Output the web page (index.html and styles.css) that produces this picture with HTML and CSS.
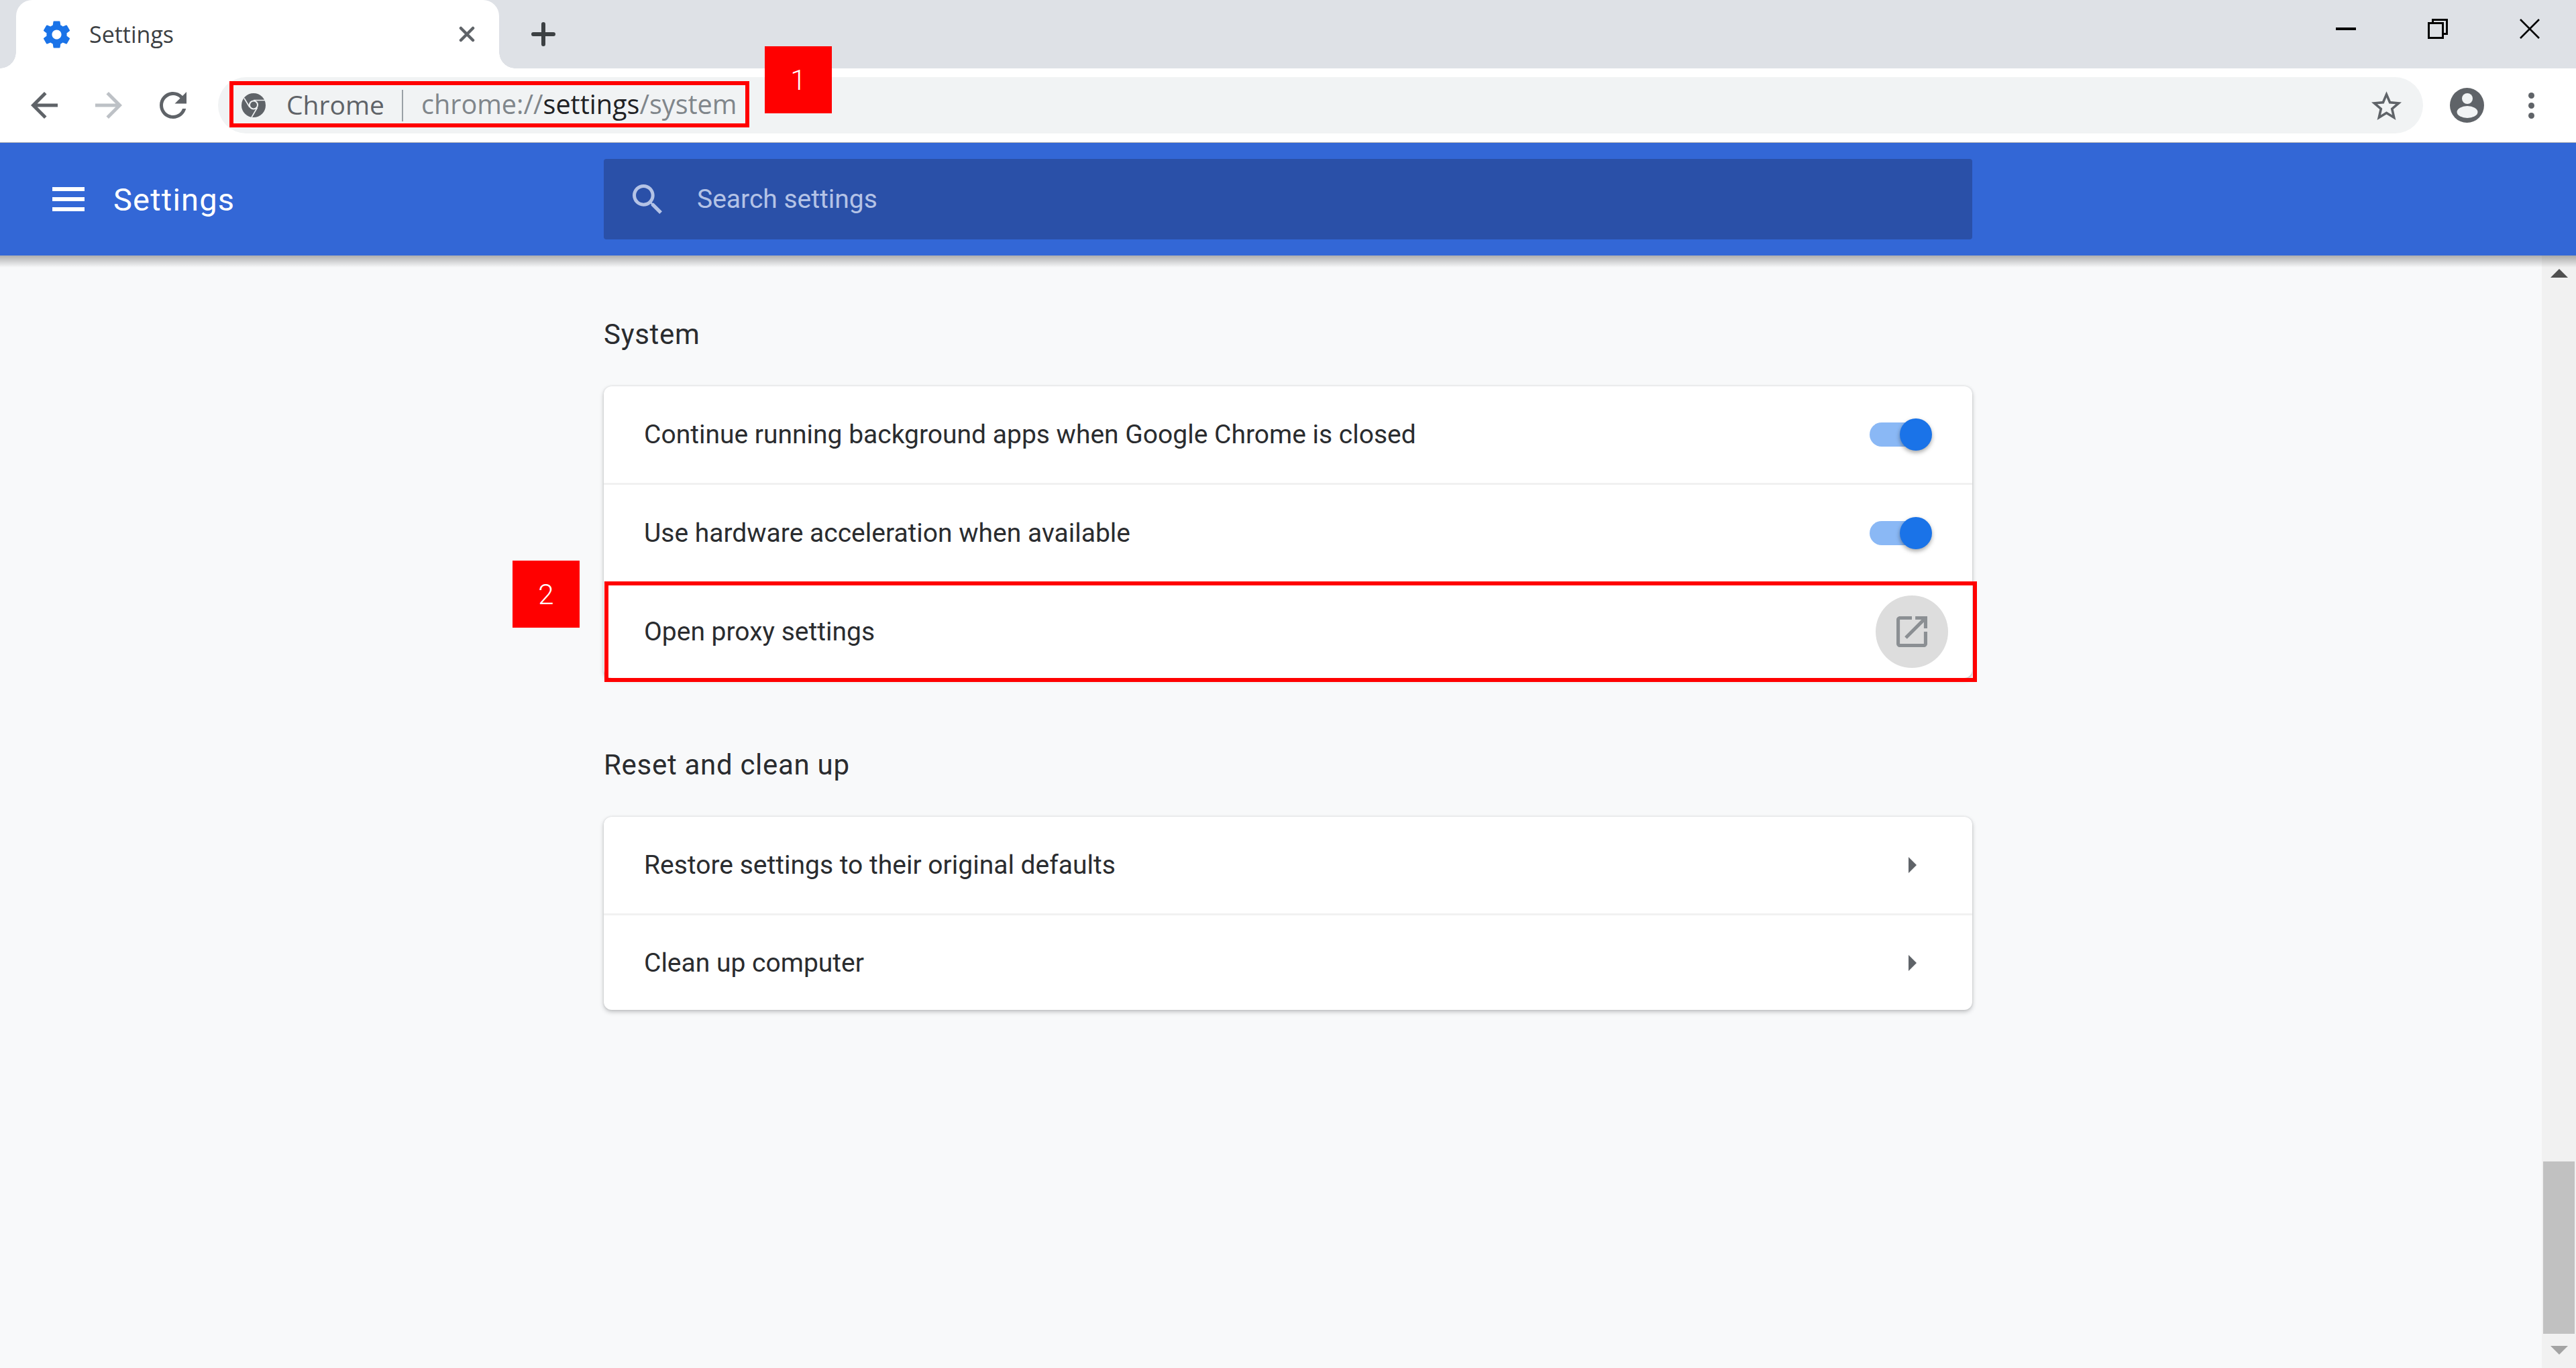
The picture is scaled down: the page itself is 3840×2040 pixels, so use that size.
FILE: index.html
```html
<!DOCTYPE html>
<html lang="en">
<head>
<meta charset="UTF-8">
<title>Settings</title>
<link rel="stylesheet" href="styles.css">
</head>
<body>
<div class="titlebar">
    <div class="tab">
        <svg class="tab-gear" viewBox="2.3 2 19.4 20"><path d="M19.43 12.98c.04-.32.07-.64.07-.98s-.03-.66-.07-.98l2.11-1.65c.19-.15.24-.42.12-.64l-2-3.46c-.12-.22-.39-.3-.61-.22l-2.49 1c-.52-.4-1.08-.73-1.69-.98l-.38-2.65C14.46 2.18 14.25 2 14 2h-4c-.25 0-.46.18-.49.42l-.38 2.65c-.61.25-1.17.59-1.69.98l-2.49-1c-.23-.09-.49 0-.61.22l-2 3.46c-.13.22-.07.49.12.64l2.11 1.65c-.04.32-.07.65-.07.98s.03.66.07.98l-2.11 1.65c-.19.15-.24.42-.12.64l2 3.46c.12.22.39.3.61.22l2.49-1c.52.4 1.08.73 1.69.98l.38 2.65c.03.24.24.42.49.42h4c.25 0 .46-.18.49-.42l.38-2.65c.61-.25 1.17-.59 1.69-.98l2.49 1c.23.09.49 0 .61-.22l2-3.46c.12-.22.07-.49-.12-.64l-2.11-1.65zM12 15.5c-1.93 0-3.5-1.57-3.5-3.5s1.57-3.5 3.5-3.5 3.5 1.57 3.5 3.5-1.57 3.5-3.5 3.5z"/></svg>
        <span class="tab-title">Settings</span>
        <svg class="tab-close" viewBox="0 0 24 24"><path d="M3 3 21 21M21 3 3 21"/></svg>
    </div>
    <svg class="new-tab" viewBox="0 0 36 36"><path d="M18 3V33M3 18H33"/></svg>
    <div class="window-controls">
        <svg class="win-icon" viewBox="0 0 30 30"><rect y="13" width="30" height="4"/></svg>
        <svg class="win-icon" viewBox="0 0 30 30">
            <path class="win-line" d="M1.5 6.5H22.5V28.5H1.5Z"/>
            <path class="win-line" d="M7.5 5.5V1.5H28.5V22.5H23"/>
        </svg>
        <svg class="win-icon" viewBox="0 0 30 30"><path class="win-line thin" d="M1 1 29 29M29 1 1 29"/></svg>
    </div>
</div>

<div class="toolbar">
    <svg class="nav-icon" viewBox="4 4 16 16"><path d="M20 11H7.83l5.59-5.59L12 4l-8 8 8 8 1.41-1.41L7.83 13H20v-2z"/></svg>
    <svg class="nav-icon disabled" viewBox="4 4 16 16"><path d="M4 11h12.17l-5.59-5.59L12 4l8 8-8 8-1.41-1.41L16.17 13H4v-2z"/></svg>
    <svg class="nav-icon" viewBox="4 4 16 16"><path d="M17.65 6.35C16.2 4.9 14.21 4 12 4c-4.42 0-7.99 3.58-7.99 8s3.57 8 7.99 8c3.73 0 6.84-2.55 7.73-6h-2.08c-.82 2.33-3.04 4-5.65 4-3.31 0-6-2.69-6-6s2.69-6 6-6c1.66 0 3.14.69 4.22 1.78L13 11h7V4l-2.35 2.35z"/></svg>
    <div class="omnibox">
        <svg class="site-icon" viewBox="0 0 36 36">
            <circle cx="18" cy="18" r="18" fill="#5f6368"/>
            <circle cx="18" cy="17.5" r="7" fill="#f1f3f4"/>
            <circle cx="18" cy="17.5" r="5" fill="#5f6368"/>
            <path d="M18 10.5H35M12.2 21 4 7.5M23.5 21.5 15 36" stroke="#f1f3f4" stroke-width="1.6" fill="none"/>
        </svg>
        <span class="site-name">Chrome</span>
        <span class="site-sep"></span>
        <span class="url">chrome://<b>settings</b>/system</span>
        <svg class="star" viewBox="2 2 20 19"><path d="M22 9.24l-7.19-.62L12 2 9.19 8.63 2 9.24l5.46 4.73L5.82 21 12 17.27 18.18 21l-1.63-7.03L22 9.24zM12 15.4l-3.76 2.27 1-4.28-3.32-2.88 4.38-.38L12 6.1l1.71 4.04 4.38.38-3.32 2.88 1 4.28L12 15.4z"/></svg>
    </div>
    <svg class="avatar" viewBox="0 0 51 52">
        <ellipse cx="25.5" cy="26" rx="25.5" ry="26" fill="#5f6368"/>
        <circle cx="26" cy="16" r="8" fill="#f1f3f4"/>
        <ellipse cx="26" cy="36" rx="15.5" ry="9" fill="#f1f3f4"/>
    </svg>
    <div class="dots"><span></span><span></span><span></span></div>
</div>

<header class="app-header">
    <div class="hamburger"><span></span><span></span><span></span></div>
    <div class="app-title">Settings</div>
    <div class="search">
        <svg class="search-icon" viewBox="3 3 17.5 17.5"><path d="M15.5 14h-.79l-.28-.27C15.41 12.59 16 11.11 16 9.5 16 5.91 13.09 3 9.5 3S3 5.91 3 9.5 5.91 16 9.5 16c1.61 0 3.09-.59 4.23-1.57l.27.28v.79l5 4.99L20.49 19l-4.99-5zm-6 0C7.01 14 5 11.99 5 9.5S7.01 5 9.5 5 14 7.01 14 9.5 11.99 14 9.5 14z"/></svg>
        <span class="search-text">Search settings</span>
    </div>
</header>

<div class="page">
    <main class="main">
        <h2 class="section-title">System</h2>
        <section class="card">
            <div class="row">
                <span>Continue running background apps when Google Chrome is closed</span>
                <div class="toggle"><span class="knob"></span></div>
            </div>
            <div class="row">
                <span>Use hardware acceleration when available</span>
                <div class="toggle"><span class="knob"></span></div>
            </div>
            <div class="row row-proxy">
                <span>Open proxy settings</span>
                <div class="icon-circle">
                    <svg class="open-icon" viewBox="3 3 18 18"><path d="M19 19H5V5h7V3H5c-1.11 0-2 .9-2 2v14c0 1.1.89 2 2 2h14c1.1 0 2-.9 2-2v-7h-2v7zM14 3v2h3.59l-9.83 9.83 1.41 1.41L19 6.41V10h2V3h-7z"/></svg>
                </div>
            </div>
        </section>

        <h2 class="section-title next">Reset and clean up</h2>
        <section class="card">
            <div class="row">
                <span>Restore settings to their original defaults</span>
                <span class="arrow"></span>
            </div>
            <div class="row">
                <span>Clean up computer</span>
                <span class="arrow"></span>
            </div>
        </section>
    </main>
    <div class="scrollbar">
        <span class="scroll-up"></span>
        <span class="scroll-thumb"></span>
        <span class="scroll-down"></span>
    </div>
</div>

<!-- red annotations on top of the screenshot -->
<div class="mark mark-url"></div>
<div class="badge badge-1">1</div>
<div class="mark mark-proxy"></div>
<div class="badge badge-2">2</div>
</body>
</html>
```

FILE: styles.css
```css
* {
    box-sizing: border-box;
}

html, body {
    margin: 0;
    height: 100%;
    overflow: hidden;
}

body {
    position: relative;
    display: flex;
    flex-direction: column;
    font-family: Roboto, "Liberation Sans", sans-serif;
    background-color: #f8f9fa;
    color: #2a2c2f;
}

/* tab strip */
.titlebar {
    display: flex;
    align-items: center;
    height: 102px;
    padding-left: 24px;
    background-color: #dee1e6;
}

.tab {
    position: relative;
    display: flex;
    align-items: center;
    width: 720px;
    height: 102px;
    padding-left: 41px;
    padding-right: 36px;
    background-color: #fff;
    border-radius: 24px 24px 0 0;
}

.tab::before,
.tab::after {
    content: "";
    position: absolute;
    bottom: 0;
    width: 24px;
    height: 24px;
}

.tab::before {
    left: -24px;
    background: radial-gradient(circle at 0 0, #dee1e6 23.5px, #fff 24px);
}

.tab::after {
    right: -24px;
    background: radial-gradient(circle at 100% 0, #dee1e6 23.5px, #fff 24px);
}

.tab-gear {
    width: 39px;
    height: 41px;
    fill: #1a73e8;
}

.tab-title {
    margin-left: 29px;
    font-family: "Open Sans", sans-serif;
    font-size: 34px;
    color: #3c4043;
}

.tab-close {
    width: 24px;
    height: 24px;
    margin-left: auto;
    fill: none;
    stroke: #5f6368;
    stroke-width: 4.5;
    stroke-linecap: round;
}

.new-tab {
    width: 36px;
    height: 36px;
    margin-left: 48px;
    fill: none;
    stroke: #3c4043;
    stroke-width: 6;
    stroke-linecap: round;
}

.window-controls {
    display: flex;
    align-items: center;
    gap: 107px;
    margin-left: auto;
    padding-right: 54px;
    padding-bottom: 16px;
}

.win-icon {
    width: 30px;
    height: 30px;
    fill: #000;
}

.win-line {
    fill: none;
    stroke: #000;
    stroke-width: 3;
}

.win-line.thin {
    stroke-width: 2.6;
}

/* address bar */
.toolbar {
    display: flex;
    align-items: center;
    height: 111px;
    padding-left: 46px;
    background-color: #fff;
    border-bottom: 1px solid #b4b5b7;
}

.nav-icon {
    width: 40px;
    height: 40px;
    margin-right: 56px;
    fill: #5f6368;
}

.nav-icon.disabled {
    fill: #bdc1c6;
}

.omnibox {
    display: flex;
    align-items: center;
    width: 3287px;
    height: 84px;
    margin-left: -9px;
    padding-left: 35px;
    padding-right: 32px;
    background-color: #f1f3f4;
    border-radius: 42px;
}

.site-icon {
    width: 36px;
    height: 36px;
}

.site-name {
    width: 146px;
    margin-left: 31px;
    padding-bottom: 4px;
    font-family: "Open Sans", sans-serif;
    font-size: 39px;
    color: #5f6368;
}

.site-sep {
    width: 2px;
    height: 47px;
    margin-left: 26px;
    background-color: #9aa0a6;
}

.url {
    margin-left: 27px;
    padding-bottom: 4px;
    font-family: "Open Sans", sans-serif;
    font-size: 39.6px;
    color: #80868b;
}

.url b {
    font-weight: 400;
    color: #202124;
}

.star {
    width: 45px;
    height: 43px;
    margin-left: auto;
    fill: #5f6368;
}

.avatar {
    width: 51px;
    height: 52px;
    margin-left: 40px;
}

.dots {
    display: flex;
    flex-direction: column;
    gap: 6px;
    margin-left: 66px;
}

.dots span {
    width: 9px;
    height: 9px;
    background-color: #5f6368;
    border-radius: 50%;
}

/* blue settings header */
.app-header {
    position: relative;
    z-index: 1;
    display: flex;
    align-items: center;
    flex: none;
    height: 168px;
    padding-left: 78px;
    background-color: #3367d6;
}

.app-header::after {
    content: "";
    position: absolute;
    left: 0;
    right: 0;
    top: 100%;
    height: 18px;
    background: linear-gradient(rgba(0, 0, 0, 0.3), rgba(0, 0, 0, 0));
}

.hamburger {
    display: flex;
    flex-direction: column;
    gap: 9px;
    width: 48px;
}

.hamburger span {
    height: 6px;
    background-color: #fff;
}

.app-title {
    width: 774px;
    padding-left: 43px;
    font-size: 47px;
    letter-spacing: 1.2px;
    color: #fff;
}

.search {
    display: flex;
    align-items: center;
    width: 2040px;
    height: 120px;
    padding-left: 43px;
    background-color: #2a50a8;
    border-radius: 4px;
}

.search-icon {
    width: 44px;
    height: 44px;
    fill: #b4c3e6;
}

.search-text {
    margin-left: 52px;
    font-size: 39px;
    color: #b4c3e6;
}

/* page content */
.page {
    display: flex;
    flex: 1;
    min-height: 0;
}

.main {
    flex: 1;
    padding-left: 900px;
}

.section-title {
    width: 2040px;
    height: 80px;
    margin: 78px 0 37px;
    font-size: 42px;
    font-weight: 400;
    letter-spacing: 0.7px;
    line-height: 80px;
}

.section-title.next {
    margin-top: 90px;
}

.card {
    width: 2040px;
    background-color: #fff;
    border-radius: 12px;
    box-shadow: 0 3px 6px rgba(60, 64, 67, 0.3), 0 0 3px rgba(60, 64, 67, 0.15);
}

.row {
    display: flex;
    align-items: center;
    justify-content: space-between;
    height: 144px;
    padding: 0 60px;
    font-size: 39px;
}

.row + .row {
    height: 147px;
    border-top: 3px solid #f1f1f1;
}

.row:last-child {
    height: 144px;
}

.row-proxy {
    padding-top: 3px;
}

.toggle {
    position: relative;
    width: 81px;
    height: 36px;
    margin-right: 12px;
    background-color: #8ab8f5;
    border-radius: 18px;
}

.knob {
    position: absolute;
    right: -12px;
    top: -6px;
    width: 48px;
    height: 48px;
    background-color: #1a73e8;
    border-radius: 50%;
    box-shadow: 0 3px 6px rgba(0, 0, 0, 0.35);
}

.icon-circle {
    display: flex;
    align-items: center;
    justify-content: center;
    width: 108px;
    height: 108px;
    margin-right: -24px;
    background-color: #ddd;
    border-radius: 50%;
}

.open-icon {
    width: 46px;
    height: 46px;
    fill: #8b8f93;
}

.arrow {
    width: 0;
    height: 0;
    margin-right: 23px;
    border-top: 12px solid transparent;
    border-bottom: 12px solid transparent;
    border-left: 12px solid #5f6368;
}

/* scrollbar */
.scrollbar {
    display: flex;
    flex-direction: column;
    align-items: center;
    width: 51px;
    padding-top: 20px;
    background-color: #f1f1f1;
}

.scroll-up {
    width: 0;
    height: 0;
    border-left: 13px solid transparent;
    border-right: 13px solid transparent;
    border-bottom: 13px solid #505050;
}

.scroll-thumb {
    width: 47px;
    height: 257px;
    margin-top: auto;
    background-color: #c1c1c1;
}

.scroll-down {
    width: 0;
    height: 0;
    margin-top: 18px;
    margin-bottom: 20px;
    border-left: 13px solid transparent;
    border-right: 13px solid transparent;
    border-top: 13px solid #a3a3a3;
}

/* annotations */
.mark {
    position: absolute;
    border: 6px solid #f00;
}

.mark-url {
    left: 342px;
    top: 121px;
    width: 775px;
    height: 69px;
}

.mark-proxy {
    left: 901px;
    top: 867px;
    width: 2046px;
    height: 150px;
}

.badge {
    position: absolute;
    display: flex;
    align-items: center;
    justify-content: center;
    width: 100px;
    height: 100px;
    background-color: #f00;
    font-size: 42px;
    font-weight: 300;
    color: #fff;
}

.badge-1 {
    left: 1140px;
    top: 69px;
}

.badge-2 {
    left: 764px;
    top: 836px;
}
```
